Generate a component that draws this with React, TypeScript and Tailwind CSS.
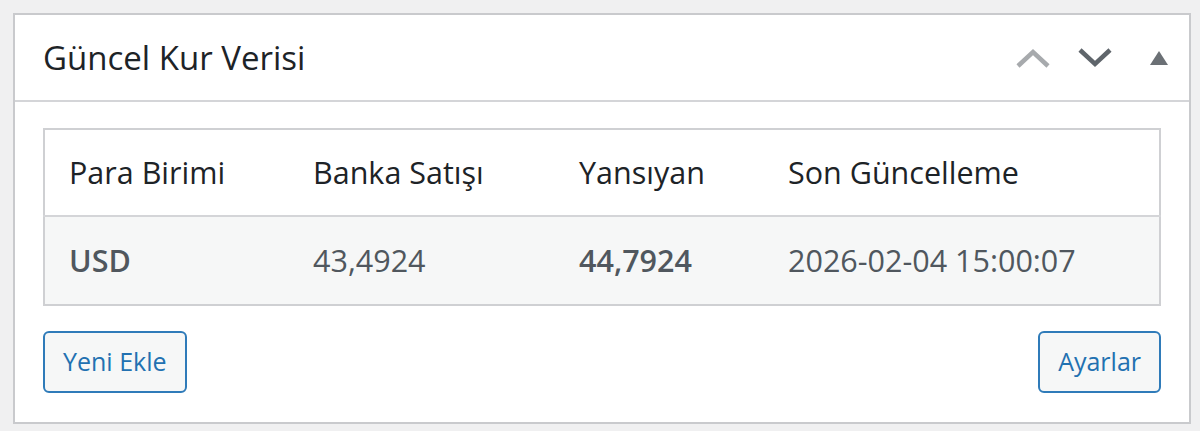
const rows = [
  { code: 'USD', bank: '43,4924', applied: '44,7924', updated: '2026-02-04 15:00:07' },
];

function Chevron({ dir, color }: { dir: 'up' | 'down'; color: string }) {
  return (
    <svg width="36" height="22" viewBox="0 0 36 22" fill="none">
      <path
        d={dir === 'up' ? 'M3 19 L18 5 L33 19' : 'M3 3 L18 17 L33 3'}
        stroke={color}
        strokeWidth="4.5"
      />
    </svg>
  );
}

export default function App() {
  return (
    <div className="min-h-[431px] bg-[#f0f0f1] pl-[13px] pr-[9px] pt-[13px] pb-[7px] font-['Open_Sans',sans-serif]">
      <div className="h-[411px] border-2 border-[#c9cacd] bg-white">
        <div className="flex h-[87px] items-center border-b-2 border-[#d4d5d8] pl-[28px] pr-[20px]">
          <h2 className="text-[33px] font-medium text-[#1d2327]">Güncel Kur Verisi</h2>
          <div className="ml-auto flex items-center">
            <Chevron dir="up" color="#a7aaad" />
            <div className="ml-[26px]">
              <Chevron dir="down" color="#5f656b" />
            </div>
            <svg className="ml-[36px]" width="20" height="16" viewBox="0 0 20 16">
              <path d="M10 1 L19 15 L1 15 Z" fill="#6b7075" />
            </svg>
          </div>
        </div>
        <div className="px-[28px] pt-[26px]">
          <table className="w-full border-2 border-[#cfd0d3] text-left text-[30.5px]">
            <thead>
              <tr className="h-[87px] border-b-2 border-[#d4d5d8] text-[#1d2327]">
                <th className="w-[245px] pl-[24px] font-normal">Para Birimi</th>
                <th className="w-[266px] pl-[24px] font-normal">Banka Satışı</th>
                <th className="w-[209px] pl-[24px] font-normal">Yansıyan</th>
                <th className="pl-[24px] font-normal">Son Güncelleme</th>
              </tr>
            </thead>
            <tbody>
              {rows.map((r) => (
                <tr key={r.code} className="h-[89px] bg-[#f6f7f7] text-[#50575e]">
                  <td className="pl-[24px] font-semibold">{r.code}</td>
                  <td className="pl-[24px]">{r.bank}</td>
                  <td className="pl-[24px] font-semibold">{r.applied}</td>
                  <td className="pl-[24px]">{r.updated}</td>
                </tr>
              ))}
            </tbody>
          </table>
          <div className="mt-[25px] flex justify-between">
            <button className="h-[62px] rounded-[6px] border-2 border-[#2f7bb9] bg-[#f6f7f7] px-[18px] text-[25px] text-[#2271b1]">
              Yeni Ekle
            </button>
            <button className="h-[62px] rounded-[6px] border-2 border-[#2f7bb9] bg-[#f6f7f7] px-[18px] text-[25px] text-[#2271b1]">
              Ayarlar
            </button>
          </div>
        </div>
      </div>
    </div>
  );
}
